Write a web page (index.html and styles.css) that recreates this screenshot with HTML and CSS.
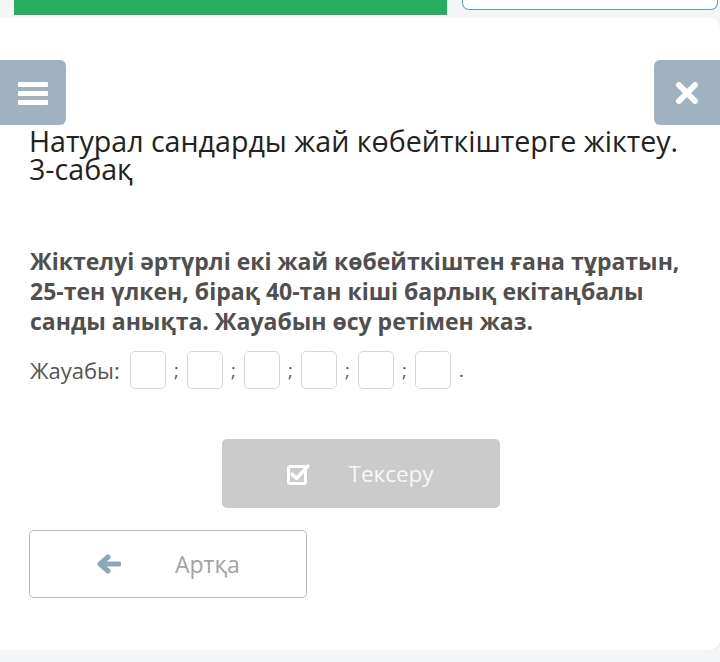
FILE: index.html
```html
<!DOCTYPE html>
<html lang="kk">
<head>
  <meta charset="UTF-8">
  <meta name="viewport" content="width=device-width, initial-scale=1.0">
  <title>Тапсырма</title>
  <link rel="stylesheet" href="styles.css">
</head>
<body>
  <div class="topbar">
    <div class="progress"></div>
    <div class="top-box"></div>
  </div>

  <div class="card">
    <div class="toolbar">
      <button class="tool-btn" aria-label="Мәзір">
        <svg width="30" height="26" viewBox="0 0 30 26"><rect x="0" y="2" width="30" height="5" rx="1" fill="#fff"/><rect x="0" y="11" width="30" height="5" rx="1" fill="#fff"/><rect x="0" y="20" width="30" height="5" rx="1" fill="#fff"/></svg>
      </button>
      <button class="tool-btn close" aria-label="Жабу">
        <svg width="26" height="26" viewBox="0 0 26 26"><path d="M5 5 L21 21 M21 5 L5 21" stroke="#fff" stroke-width="6" stroke-linecap="round"/></svg>
      </button>
    </div>

    <h1 class="title">Натурал сандарды жай көбейткіштерге жіктеу. 3-сабақ</h1>

    <p class="question">Жіктелуі әртүрлі екі жай көбейткіштен ғана тұратын, 25-тен үлкен, бірақ 40-тан кіші барлық екітаңбалы санды анықта. Жауабын өсу ретімен жаз.</p>

    <div class="answer">
      <span class="answer-label">Жауабы:</span>
      <input class="cell" type="text"><span class="sep">;</span>
      <input class="cell" type="text"><span class="sep">;</span>
      <input class="cell" type="text"><span class="sep">;</span>
      <input class="cell" type="text"><span class="sep">;</span>
      <input class="cell" type="text"><span class="sep">;</span>
      <input class="cell" type="text"><span class="sep">.</span>
    </div>

    <div class="actions">
      <button class="btn check">
        <svg width="24" height="22" viewBox="0 0 24 22"><rect x="1.5" y="3.5" width="17" height="17" rx="2" fill="none" stroke="#fff" stroke-width="3"/><path d="M5 11 L9.5 15.5 L21 3" fill="none" stroke="#fff" stroke-width="3.5" stroke-linecap="round" stroke-linejoin="round"/></svg>
        <span>Тексеру</span>
      </button>
    </div>

    <button class="btn back">
      <svg width="24" height="20" viewBox="0 0 24 20"><path d="M3 10 L11 3 M3 10 L11 17 M3 10 L22 10" fill="none" stroke="#8fa8b6" stroke-width="5" stroke-linecap="round" stroke-linejoin="round"/></svg>
      <span>Артқа</span>
    </button>
  </div>
</body>
</html>
```

FILE: styles.css
```css
body {
  margin: 0;
  background-color: #f3f5f7;
  font-family: "Open Sans", Arial, sans-serif;
}
.topbar {
  display: flex;
  gap: 15px;
  padding: 0 2px 0 14px;
  height: 18px;
}
.progress {
  width: 433px;
  height: 15px;
  background-color: #27ae60;
}
.top-box {
  flex: 1;
  height: 9px;
  border: 1.5px solid #5f9fb4;
  border-top: none;
  border-radius: 0 0 7px 7px;
  background-color: #fff;
}
.card {
  background-color: #fff;
  border-radius: 0 10px 10px 0;
  height: 632px;
  box-shadow: 0 1px 2px rgba(0, 0, 0, 0.06);
}
.toolbar {
  display: flex;
  justify-content: space-between;
  padding-top: 42px;
}
.tool-btn {
  width: 66px;
  height: 65px;
  border: none;
  border-radius: 0 6px 6px 0;
  background-color: #a0b2bf;
  display: flex;
  align-items: center;
  justify-content: center;
  padding: 0;
}
.tool-btn.close {
  border-radius: 6px 0 0 6px;
}
.title {
  margin: 2px 30px 0 29px;
  font-size: 28.6px;
  font-weight: 400;
  line-height: 28px;
  color: #222;
}
.question {
  margin: 63px 30px 0;
  font-size: 23px;
  font-weight: 700;
  line-height: 30px;
  color: #4f4f4f;
}
.answer {
  display: flex;
  align-items: center;
  margin: 15px 30px 0;
  font-size: 22px;
  color: #555;
}
.answer-label {
  margin-right: 10px;
}
.cell {
  width: 36px;
  height: 38px;
  box-sizing: border-box;
  border: 1px solid #d6d9dc;
  border-radius: 5px;
  padding: 0;
}
.sep {
  width: 21px;
  text-align: center;
  font-size: 18px;
}
.actions {
  display: flex;
  justify-content: center;
  margin-top: 50px;
}
.btn {
  width: 278px;
  height: 69px;
  border-radius: 5px;
  display: flex;
  align-items: center;
  padding: 0 0 0 65px;
  gap: 38px;
  font-family: "Open Sans", Arial, sans-serif;
  font-size: 22.5px;
  box-sizing: border-box;
}
.check {
  background-color: #cbcbcb;
  border: none;
  color: #f7f7f7;
  margin-left: 1px;
}
.back {
  margin: 22px 0 0 29px;
  height: 68px;
  background-color: #fff;
  border: 1px solid #b8b8b8;
  color: #a3a3a3;
  padding-left: 67px;
  gap: 54px;
  font-size: 23px;
}
```
